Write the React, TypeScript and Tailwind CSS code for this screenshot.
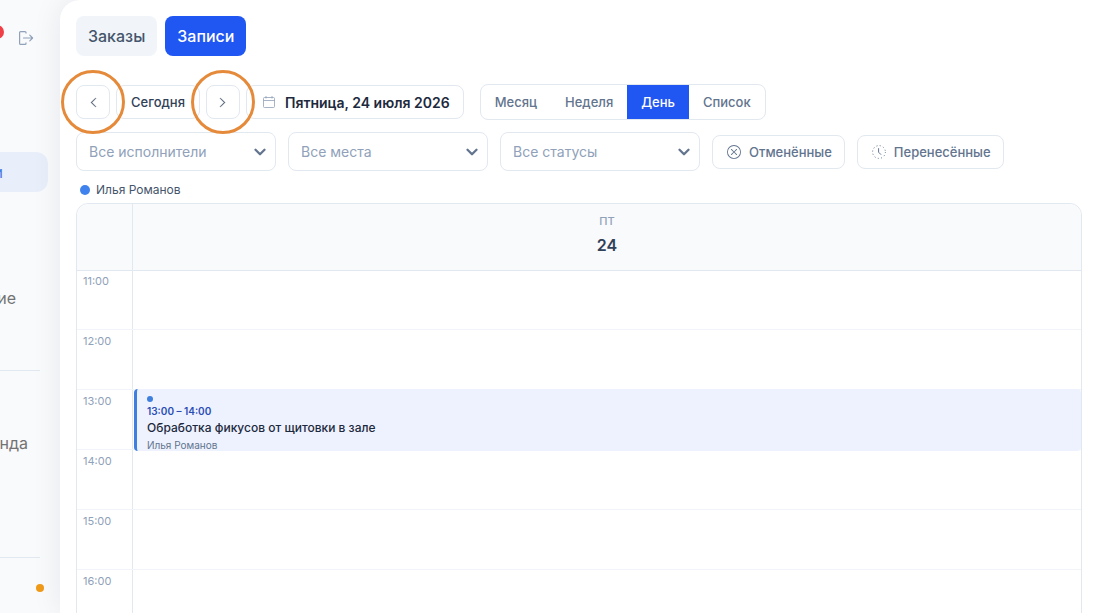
import { useState } from 'react';
import clsx from 'clsx';
import { BsChevronDown, BsChevronLeft, BsChevronRight, BsXCircle } from 'react-icons/bs';

const views = ['Месяц', 'Неделя', 'День', 'Список'];
const filters = ['Все исполнители', 'Все места', 'Все статусы'];
const hours = ['11:00', '12:00', '13:00', '14:00', '15:00', '16:00'];

const outlined = 'rounded-lg border border-slate-200 bg-white';

function LogoutIcon() {
  return (
    <svg viewBox="0 0 16 16" className="size-4" fill="none" stroke="currentColor" strokeWidth="1.2" aria-hidden="true">
      <path d="M8 3.6V2.6a1 1 0 0 0-1-1H2.6a1 1 0 0 0-1 1v10.8a1 1 0 0 0 1 1H7a1 1 0 0 0 1-1V12.4" />
      <path d="M5.5 8H14.4M11.8 5.2 14.6 8l-2.8 2.8" strokeLinecap="round" strokeLinejoin="round" />
    </svg>
  );
}

function CalendarIcon() {
  return (
    <svg viewBox="0 0 12 13" className="h-[13px] w-3" fill="none" stroke="currentColor" strokeWidth="0.8" aria-hidden="true">
      <rect x="0.5" y="1.5" width="11" height="10" rx="1" />
      <path d="M0.5 4.5h11M3 0v2.5M9 0v2.5" />
    </svg>
  );
}

function DottedClock() {
  return (
    <svg viewBox="0 0 14 14" className="size-[14px]" fill="none" stroke="currentColor" aria-hidden="true">
      <circle cx="7" cy="7" r="6.4" strokeDasharray="1 2.35" />
      <path d="M6.6 3.6v3.6l2.2 2.2" strokeLinecap="round" />
    </svg>
  );
}

function StepButton({ label, children }: { label: string; children: React.ReactNode }) {
  return (
    <div className="relative">
      <button
        aria-label={label}
        className={`${outlined} flex size-[34px] items-center justify-center text-slate-600`}
      >
        {children}
      </button>
      <span className="pointer-events-none absolute -inset-[15px] z-10 rounded-full border-3 border-[#e58a3a]" />
    </div>
  );
}

function Sidebar() {
  return (
    <aside className="flex w-[60px] shrink-0 flex-col overflow-hidden text-base text-neutral-500">
      <div className="flex h-[76px] items-center">
        <span className="mb-3 -ml-[10px] size-[14px] rounded-full bg-[#ef4048]" />
        <button aria-label="Выйти" className="ml-[14px] text-slate-400">
          <LogoutIcon />
        </button>
      </div>
      <a
        href="#"
        className="mt-[76px] mr-3 flex h-10 items-center justify-end rounded-r-xl bg-[#e9effa] pr-[45px] text-[#4a7de0]"
      >
        и
      </a>
      <a href="#" className="mt-[86px] flex h-10 items-center justify-end pr-[44px]">
        ие
      </a>
      <hr className="mt-[52px] mr-5 border-slate-200" />
      <a href="#" className="mt-[52px] flex h-10 items-center justify-end pr-8">
        нда
      </a>
      <hr className="mt-[94px] mr-5 border-slate-200" />
      <span className="mt-[26px] mr-4 size-2 self-end rounded-full bg-[#f09a1a]" />
    </aside>
  );
}

function Calendar() {
  return (
    <section className="mt-[5px] rounded-t-xl border border-slate-200">
      <div className="flex h-[67px] rounded-t-xl border-b border-slate-200 bg-[#f9fafc]">
        <div className="w-14 shrink-0 border-r border-slate-200" />
        <div className="flex flex-1 flex-col items-center pt-[9px]">
          <span className="text-[11px] leading-4 font-medium text-slate-400">ПТ</span>
          <span className="mt-1 text-base leading-6 font-semibold text-slate-700">24</span>
        </div>
      </div>
      {hours.map((hour, i) => (
        <div key={hour} className={clsx('flex border-b border-slate-100', i === 0 ? 'h-[59px]' : 'h-[60px]')}>
          <div
            className={clsx(
              'w-14 shrink-0 border-r border-slate-200 pl-[6px] text-[11px] leading-4 text-slate-400',
              i === 0 ? 'pt-[2px]' : 'pt-[3px]'
            )}
          >
            {hour}
          </div>
          <div className="relative flex-1">
            {hour === '13:00' && (
              <article className="absolute -top-px right-0 left-px z-10 h-[62px] overflow-hidden rounded-sm border-l-3 border-[#3f7fdd] bg-[#edf2fe] pt-[7px] pl-[10px]">
                <span className="block size-[6px] rounded-full bg-[#3f7fdd]" />
                <p className="mt-[3px] text-[10px] leading-3 font-semibold text-[#2a4db5]">13:00 – 14:00</p>
                <h3 className="mt-[3px] text-xs leading-4 font-medium text-slate-800">
                  Обработка фикусов от щитовки в зале
                </h3>
                <p className="mt-[3px] text-[10px] leading-3 text-slate-500">Илья Романов</p>
              </article>
            )}
          </div>
        </div>
      ))}
    </section>
  );
}

export default function App() {
  const [view, setView] = useState('День');

  return (
    <div className="flex h-screen overflow-hidden bg-[#f9fafc] font-['Inter',sans-serif]">
      <Sidebar />
      <main className="min-w-0 flex-1 rounded-tl-[20px] bg-white px-4 pt-4 shadow-[0_0_30px_rgba(15,23,42,0.08)]">
        <nav className="flex gap-2 text-base font-medium">
          <button className="h-10 rounded-lg bg-slate-100 px-3 text-slate-600">Заказы</button>
          <button className="h-10 rounded-lg bg-[#2056f2] px-3 text-white">Записи</button>
        </nav>

        <div className="mt-7 flex items-center gap-4">
          <div className="flex gap-[6px]">
            <StepButton label="Назад">
              <BsChevronLeft size={11} strokeWidth={0.5} />
            </StepButton>
            <button className={`${outlined} h-[34px] px-[14px] text-[13px] leading-5 font-medium text-slate-700`}>
              Сегодня
            </button>
            <StepButton label="Вперёд">
              <BsChevronRight size={11} strokeWidth={0.5} />
            </StepButton>
            <button className={`${outlined} flex h-[34px] items-center gap-[10px] pr-[13px] pl-4`}>
              <span className="text-slate-400">
                <CalendarIcon />
              </span>
              <span className="text-sm leading-[23px] font-semibold text-slate-800">Пятница, 24 июля 2026</span>
            </button>
          </div>
          <div className={`${outlined} flex h-9 overflow-hidden`}>
            {views.map((v) => (
              <button
                key={v}
                onClick={() => setView(v)}
                className={clsx(
                  'px-[14px] text-[13px] leading-5 font-medium',
                  v === view ? 'bg-[#2056f2] text-white' : 'text-slate-500'
                )}
              >
                {v}
              </button>
            ))}
          </div>
        </div>

        <div className="mt-3 flex items-center gap-3">
          {filters.map((f) => (
            <div key={f} className="relative w-[200px]">
              <select
                aria-label={f}
                className={`${outlined} h-[39px] w-full appearance-none px-3 text-sm text-slate-400`}
              >
                <option>{f}</option>
              </select>
              <BsChevronDown
                size={12}
                strokeWidth={2}
                className="pointer-events-none absolute top-[14px] right-[10px] text-slate-500"
              />
            </div>
          ))}
          <button
            className={`${outlined} flex h-[34px] items-center gap-2 pr-3 pl-[14px] text-[13px] leading-5 font-medium text-slate-500`}
          >
            <BsXCircle size={14} />
            Отменённые
          </button>
          <button
            className={`${outlined} flex h-[34px] items-center gap-2 pr-3 pl-[14px] text-[13px] leading-5 font-medium text-slate-500`}
          >
            <DottedClock />
            Перенесённые
          </button>
        </div>

        <div className="mt-[11px] flex items-center gap-[6px] pl-1 text-xs text-slate-600">
          <span className="size-[10px] rounded-full bg-[#3f82ee]" />
          Илья Романов
        </div>

        <Calendar />
      </main>
    </div>
  );
}
